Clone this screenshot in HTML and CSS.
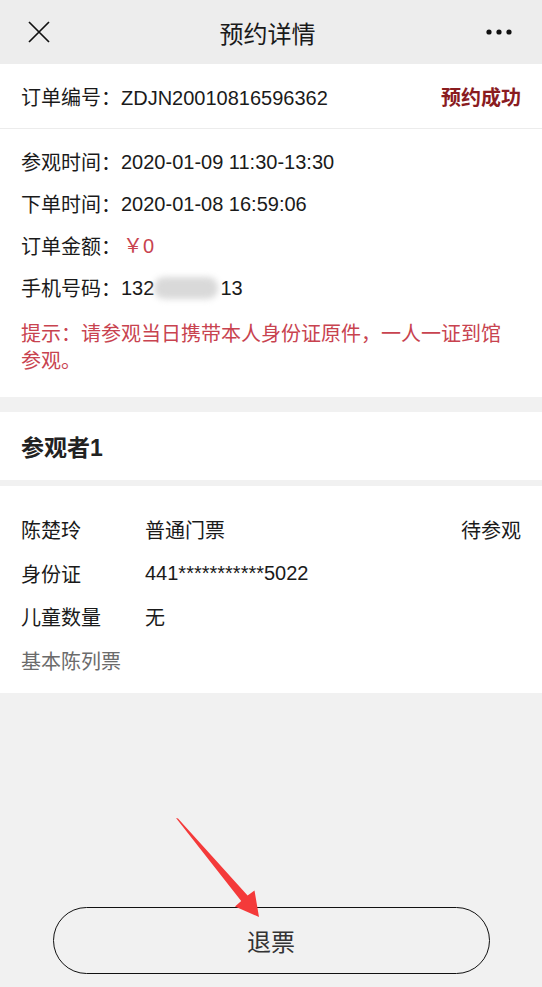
FILE: index.html
```html
<!DOCTYPE html>
<html lang="zh-CN">
<head>
<meta charset="utf-8">
<title>预约详情</title>
<link rel="stylesheet" href="styles.css">
</head>
<body>
<div class="page">
  <header class="navbar">
    <svg class="nav-close" width="22" height="22" viewBox="0 0 22 22">
      <path d="M1 1 L21 21 M21 1 L1 21" stroke="#111" stroke-width="1.7" fill="none"/>
    </svg>
    <div class="nav-title">预约详情</div>
    <svg class="nav-more" width="30" height="8" viewBox="0 0 30 8">
      <circle cx="4" cy="4" r="2.6" fill="#111"/>
      <circle cx="14" cy="4" r="2.6" fill="#111"/>
      <circle cx="24" cy="4" r="2.6" fill="#111"/>
    </svg>
  </header>

  <section class="order-row">
    <div class="order-no"><span class="label">订单编号：</span>ZDJN20010816596362</div>
    <div class="status">预约成功</div>
  </section>

  <section class="card details">
    <div class="row"><span class="label">参观时间：</span>2020-01-09 11:30-13:30</div>
    <div class="row"><span class="label">下单时间：</span>2020-01-08 16:59:06</div>
    <div class="row"><span class="label">订单金额：</span><span class="price">￥0</span></div>
    <div class="row"><span class="label">手机号码：</span>132<span class="blur"></span>13</div>
    <p class="tip">提示：请参观当日携带本人身份证原件，一人一证到馆参观。</p>
  </section>

  <section class="card visitor-head">参观者1</section>

  <section class="card visitor">
    <div class="vrow"><span class="vlabel">陈楚玲</span><span class="vvalue">普通门票</span><span class="vstatus">待参观</span></div>
    <div class="vrow"><span class="vlabel">身份证</span><span class="vvalue">441***********5022</span></div>
    <div class="vrow"><span class="vlabel">儿童数量</span><span class="vvalue">无</span></div>
    <div class="vrow muted">基本陈列票</div>
  </section>

  <div class="actions">
    <button class="refund">退票</button>
  </div>

  <svg class="arrow" width="542" height="987" viewBox="0 0 542 987">
    <polygon points="176,818 178,818.4 247.6,895.6 254.5,890.5 259,917 235,906.5 241.2,901" fill="#f43a3a"/>
  </svg>
</div>
</body>
</html>
```

FILE: styles.css
```css
* { box-sizing: border-box; }

html, body {
  margin: 0;
  padding: 0;
  background: #f1f1f1;
}

body {
  font-family: "Liberation Sans", "Noto Sans CJK SC", sans-serif;
  color: #1a1a1a;
  font-size: 20px;
}

.page {
  position: relative;
  width: 542px;
  min-height: 987px;
}

.navbar {
  height: 64px;
  background: #ededed;
  display: flex;
  align-items: center;
  justify-content: space-between;
  padding: 0 27px 0 28px;
}

.nav-close { display: block; }

.nav-title {
  font-size: 24px;
  color: #1a1a1a;
}

.nav-more { display: block; }

.order-row {
  height: 65px;
  background: #fff;
  border-bottom: 1px solid #ececec;
  display: flex;
  align-items: center;
  justify-content: space-between;
  padding: 0 21px;
}

.label { font-family: "Noto Sans CJK SC", sans-serif; }

.status {
  font-weight: bold;
  color: #8a1c1f;
  font-family: "Noto Sans CJK SC", sans-serif;
}

.card { background: #fff; }

.details {
  padding: 12px 21px 24px;
}

.row {
  height: 42px;
  line-height: 42px;
  display: flex;
  align-items: center;
  white-space: nowrap;
}

.price {
  color: #c8434f;
  padding-left: 2px;
}

.blur {
  display: inline-block;
  width: 64px;
  height: 22px;
  margin: 0 2px 0 0;
  background: #d9d9d9;
  border-radius: 10px;
  filter: blur(3px);
}

.tip {
  margin: 10px 10px 0 0;
  line-height: 27px;
  color: #c8434f;
  font-family: "Noto Sans CJK SC", sans-serif;
}

.visitor-head {
  margin-top: 15px;
  height: 68px;
  display: flex;
  align-items: center;
  padding: 0 21px;
  font-size: 23px;
  font-weight: bold;
  color: #222;
}

.visitor {
  margin-top: 6px;
  padding: 22px 21px 11px;
}

.vrow {
  height: 43.6px;
  display: flex;
  align-items: center;
  white-space: nowrap;
}

.vlabel {
  width: 124px;
  font-family: "Noto Sans CJK SC", sans-serif;
}

.vvalue { flex: 1; }

.vstatus { font-family: "Noto Sans CJK SC", sans-serif; }

.muted {
  color: #6b6b6b;
  font-family: "Noto Sans CJK SC", sans-serif;
}

.actions {
  display: flex;
  justify-content: center;
  padding-top: 214px;
}

.refund {
  width: 437px;
  height: 67px;
  border: 1.5px solid #111;
  border-radius: 34px;
  background: transparent;
  font-family: "Noto Sans CJK SC", sans-serif;
  font-size: 24px;
  color: #333;
  padding: 0;
}

.arrow {
  position: absolute;
  left: 0;
  top: 0;
  pointer-events: none;
}
```
